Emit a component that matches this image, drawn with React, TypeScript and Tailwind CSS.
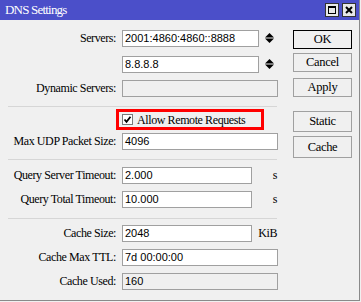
import { ReactNode } from "react";

const serif = "font-['Liberation_Serif',serif] text-[12px] tracking-[-0.4px] text-black";
const sans = "font-['Liberation_Sans',Arial,sans-serif] text-[11px] text-black";

function Label({ children }: { children: ReactNode }) {
  return <div className={`w-[116px] shrink-0 text-right leading-[17px] ${serif}`}>{children}</div>;
}

function Field({ value, w, disabled }: { value?: string; w: string; disabled?: boolean }) {
  return (
    <div
      className={`ml-[6px] h-[17px] ${w} border border-[#a0a0a0] pl-[2px] leading-[15px] ${sans} ${
        disabled ? "bg-[#f0f0f0]" : "bg-white"
      }`}
    >
      {value}
    </div>
  );
}

function Spinner() {
  return (
    <svg width="9" height="10" viewBox="0 0 9 10" className="ml-[6px] mt-[3px]">
      <path d="M0 4.5 L4.5 0 L9 4.5 Z" fill="#000" />
      <path d="M0 5.5 L4.5 10 L9 5.5 Z" fill="#000" />
    </svg>
  );
}

function Unit({ children }: { children: ReactNode }) {
  return <div className={`w-[25px] text-right leading-[17px] ${serif}`}>{children}</div>;
}

function Row({ className, children }: { className: string; children: ReactNode }) {
  return <div className={`flex h-[17px] items-start ${className}`}>{children}</div>;
}

function Separator({ className }: { className: string }) {
  return <div className={`ml-[8px] h-px w-[269px] bg-[#d6d6d6] ${className}`} />;
}

function Btn({ children, main, className }: { children: ReactNode; main?: boolean; className: string }) {
  return (
    <div
      className={`flex w-[59px] items-center justify-center border bg-[#f0f0f0] font-['Liberation_Serif',serif] text-[12.5px] tracking-[-0.3px] text-black ${
        main ? "border-black" : "border-[#a0a0a0]"
      } ${className}`}
    >
      {children}
    </div>
  );
}

export default function App() {
  return (
    <div className="h-[302px] w-[361px] bg-[#f0f0f0]">
      <div className="flex h-[301px] w-[360px] flex-col border-b border-r border-[#8a8a8a]">
        <div className="flex h-[20px] items-center bg-[#4b4fc9] pl-[5px] pr-[3px]">
          <div className="flex-1 font-['Liberation_Serif',serif] text-[13px] tracking-[-0.8px] text-white">
            DNS Settings
          </div>
          <div className="flex h-[14px] w-[14px] items-center justify-center border border-[#333] bg-[#e8e8e8]">
            <div className="h-[8px] w-[8px] border border-t-2 border-black" />
          </div>
          <div className="ml-[3px] flex h-[14px] w-[14px] items-center justify-center border border-[#333] bg-[#e8e8e8]">
            <svg width="8" height="8" viewBox="0 0 8 8">
              <path d="M1 1 L7 7 M7 1 L1 7" stroke="#000" strokeWidth="2" />
            </svg>
          </div>
        </div>

        <div className="flex flex-1">
          <div className="w-[292px]">
            <Row className="mt-[10px]">
              <Label>Servers:</Label>
              <Field value="2001:4860:4860::8888" w="w-[137px]" />
              <Spinner />
            </Row>
            <Row className="mt-[9px]">
              <Label>&nbsp;</Label>
              <Field value="8.8.8.8" w="w-[137px]" />
              <Spinner />
            </Row>
            <Row className="mt-[7px]">
              <Label>Dynamic Servers:</Label>
              <Field w="w-[156px]" disabled />
            </Row>
            <Separator className="mt-[9px]" />
            <div className="ml-[116px] mt-[2px] flex h-[21px] w-[148px] items-center border-[3px] border-[#ff0000] pl-[3px]">
              <div className="flex h-[11px] w-[11px] items-center justify-center border border-[#7a7a7a] bg-white">
                <svg width="9" height="9" viewBox="0 0 9 9">
                  <path d="M1.5 4.5 L3.5 6.8 L7.5 1.8" stroke="#000" strokeWidth="1.8" fill="none" />
                </svg>
              </div>
              <div className={`ml-[4px] ${serif} tracking-[-0.2px]`}>Allow Remote Requests</div>
            </div>
            <Row className="mt-[3px]">
              <Label>Max UDP Packet Size:</Label>
              <Field value="4096" w="w-[156px]" />
            </Row>
            <Separator className="mt-[9px]" />
            <Row className="mt-[7px]">
              <Label>Query Server Timeout:</Label>
              <Field value="2.000" w="w-[130px]" />
              <Unit>s</Unit>
            </Row>
            <Row className="mt-[7px]">
              <Label>Query Total Timeout:</Label>
              <Field value="10.000" w="w-[130px]" />
              <Unit>s</Unit>
            </Row>
            <Separator className="mt-[10px]" />
            <Row className="mt-[6px]">
              <Label>Cache Size:</Label>
              <Field value="2048" w="w-[130px]" />
              <Unit>KiB</Unit>
            </Row>
            <Row className="mt-[7px]">
              <Label>Cache Max TTL:</Label>
              <Field value="7d 00:00:00" w="w-[156px]" />
            </Row>
            <Row className="mt-[7px]">
              <Label>Cache Used:</Label>
              <Field value="160" w="w-[156px]" disabled />
            </Row>
          </div>

          <div className="ml-[1px] flex flex-col">
            <Btn main className="mt-[10px] h-[19px]">OK</Btn>
            <Btn className="mt-[4px] h-[19px]">Cancel</Btn>
            <Btn className="mt-[6px] h-[19px]">Apply</Btn>
            <Btn className="mt-[14px] h-[21px]">Static</Btn>
            <Btn className="mt-[4px] h-[22px]">Cache</Btn>
          </div>
        </div>
      </div>
    </div>
  );
}
